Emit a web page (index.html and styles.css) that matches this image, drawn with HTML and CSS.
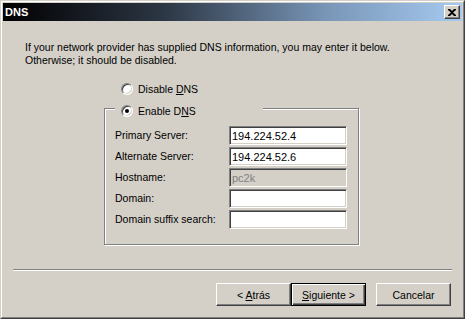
FILE: index.html
```html
<!DOCTYPE html>
<html lang="es">
<head>
    <meta charset="UTF-8">
    <title>DNS</title>
    <link rel="stylesheet" href="styles.css">
</head>
<body>

    <div class="window">
        <div class="frame">

            <!-- Title bar -->
            <div class="titlebar">
                <span class="title">DNS</span>
                <span class="close-btn">
                    <svg width="8" height="7" viewBox="0 0 8 7">
                        <path d="M0 0h2l2 2 2-2h2v1L5 3.5 8 6v1H6L4 5 2 7H0V6l3-2.5L0 1z" fill="#000"/>
                    </svg>
                </span>
            </div>

            <div class="content">
                <p class="intro">If your network provider has supplied DNS information, you may enter it below.<br>Otherwise; it should be disabled.</p>

                <div class="options">
                    <label class="radio-row">
                        <span class="radio"></span>
                        <span>Disable <u>D</u>NS</span>
                    </label>

                    <fieldset class="group">
                        <legend>
                            <label class="radio-row">
                                <span class="radio checked"></span>
                                <span>Enable D<u>N</u>S</span>
                            </label>
                        </legend>

                        <div class="fields">
                            <span class="lbl">Primary Server:</span>
                            <input type="text" value="194.224.52.4">
                            <span class="lbl">Alternate Server:</span>
                            <input type="text" value="194.224.52.6">
                            <span class="lbl">Hostname:</span>
                            <input type="text" value="pc2k" disabled>
                            <span class="lbl">Domain:</span>
                            <input type="text" value="">
                            <span class="lbl">Domain suffix search:</span>
                            <input type="text" value="">
                        </div>
                    </fieldset>
                </div>
            </div>

            <div class="separator"></div>

            <div class="buttons">
                <button>&lt; <u>A</u>trás</button>
                <button class="default"><u>S</u>iguiente &gt;</button>
                <button class="cancel">Cancelar</button>
            </div>

        </div>
    </div>

</body>
</html>
```

FILE: styles.css
```css
html, body {
    margin: 0;
    padding: 0;
}
body {
    font-family: "Liberation Sans", Arial, sans-serif;
    font-size: 10.5px;
    line-height: 13px;
    color: #000;
    background: #d4d0c8;
}
.window {
    width: 465px;
    height: 319px;
    box-sizing: border-box;
    border: 1px solid;
    border-color: #d4d0c8 #404040 #404040 #d4d0c8;
    background: #d4d0c8;
}
.frame {
    height: 100%;
    box-sizing: border-box;
    border: 1px solid;
    border-color: #fff #808080 #808080 #fff;
    padding: 1px;
}

/* title bar */
.titlebar {
    height: 18px;
    display: flex;
    align-items: center;
    justify-content: space-between;
    padding: 0 2px;
    background: linear-gradient(to right, #000 0%, #2c3644 35%, #7895b6 70%, #a6caf0 100%);
}
.title {
    color: #fff;
    font-weight: bold;
    font-size: 11px;
}
.close-btn {
    width: 16px;
    height: 14px;
    box-sizing: border-box;
    display: flex;
    align-items: center;
    justify-content: center;
    background: #d4d0c8;
    border: 1px solid;
    border-color: #fff #404040 #404040 #fff;
    box-shadow: inset -1px -1px 0 #808080;
}

/* main area */
.content {
    padding: 20px 0 0 22px;
    height: 248px;
    box-sizing: border-box;
}
.intro {
    margin: 0;
}
.options {
    margin-left: 79px;
    margin-top: 15px;
    width: 255px;
}
.options > .radio-row {
    padding-left: 17px;
}
.radio-row {
    display: flex;
    align-items: center;
    gap: 5px;
    height: 14px;
}
.radio {
    width: 12px;
    height: 12px;
    box-sizing: border-box;
    border-radius: 50%;
    border: 1px solid;
    border-color: #808080 #fff #fff #808080;
    box-shadow: inset 1px 1px 0 #404040, inset -1px -1px 0 #d4d0c8;
    background: #fff;
    display: flex;
    align-items: center;
    justify-content: center;
}
.radio.checked::after {
    content: "";
    width: 4px;
    height: 4px;
    border-radius: 50%;
    background: #000;
}

/* group box */
.group {
    margin: 2px 0 0 0;
    padding: 8px 11px 15px 10px;
    border: 1px solid #808080;
    box-shadow: 1px 1px 0 #fff, inset 1px 1px 0 #fff;
    min-width: 0;
}
.group legend {
    width: 148px;
    box-sizing: border-box;
    padding: 6px 0 0 6px;
    background: #d4d0c8;
}
.fields {
    display: grid;
    grid-template-columns: 1fr 118px;
    row-gap: 2px;
    align-items: center;
}
.fields input {
    height: 19px;
    width: 118px;
    box-sizing: border-box;
    margin: 0;
    padding: 0 2px;
    font-family: "Liberation Sans", Arial, sans-serif;
    font-size: 11px;
    color: #000;
    background: #fff;
    border: 1px solid;
    border-color: #808080 #fff #fff #808080;
    box-shadow: inset 1px 1px 0 #404040, inset -1px -1px 0 #d4d0c8;
    outline: none;
}
.fields input:disabled {
    background: #d4d0c8;
    color: #808080;
}

/* bottom */
.separator {
    margin: 0 10px;
    border-top: 1px solid #808080;
    border-bottom: 1px solid #fff;
    height: 0;
}
.buttons {
    display: flex;
    justify-content: flex-end;
    padding: 12px 11px 0 0;
}
button {
    width: 75px;
    height: 23px;
    box-sizing: border-box;
    margin: 0;
    padding: 0;
    font-family: "Liberation Sans", Arial, sans-serif;
    font-size: 10.5px;
    color: #000;
    background: #d4d0c8;
    border: 1px solid;
    border-color: #fff #404040 #404040 #fff;
    box-shadow: inset -1px -1px 0 #808080;
}
button.default {
    border: 1px solid #000;
    box-shadow: inset 1px 1px 0 #fff, inset -1px -1px 0 #404040, inset -2px -2px 0 #808080;
}
button.cancel {
    margin-left: 10px;
}
```
